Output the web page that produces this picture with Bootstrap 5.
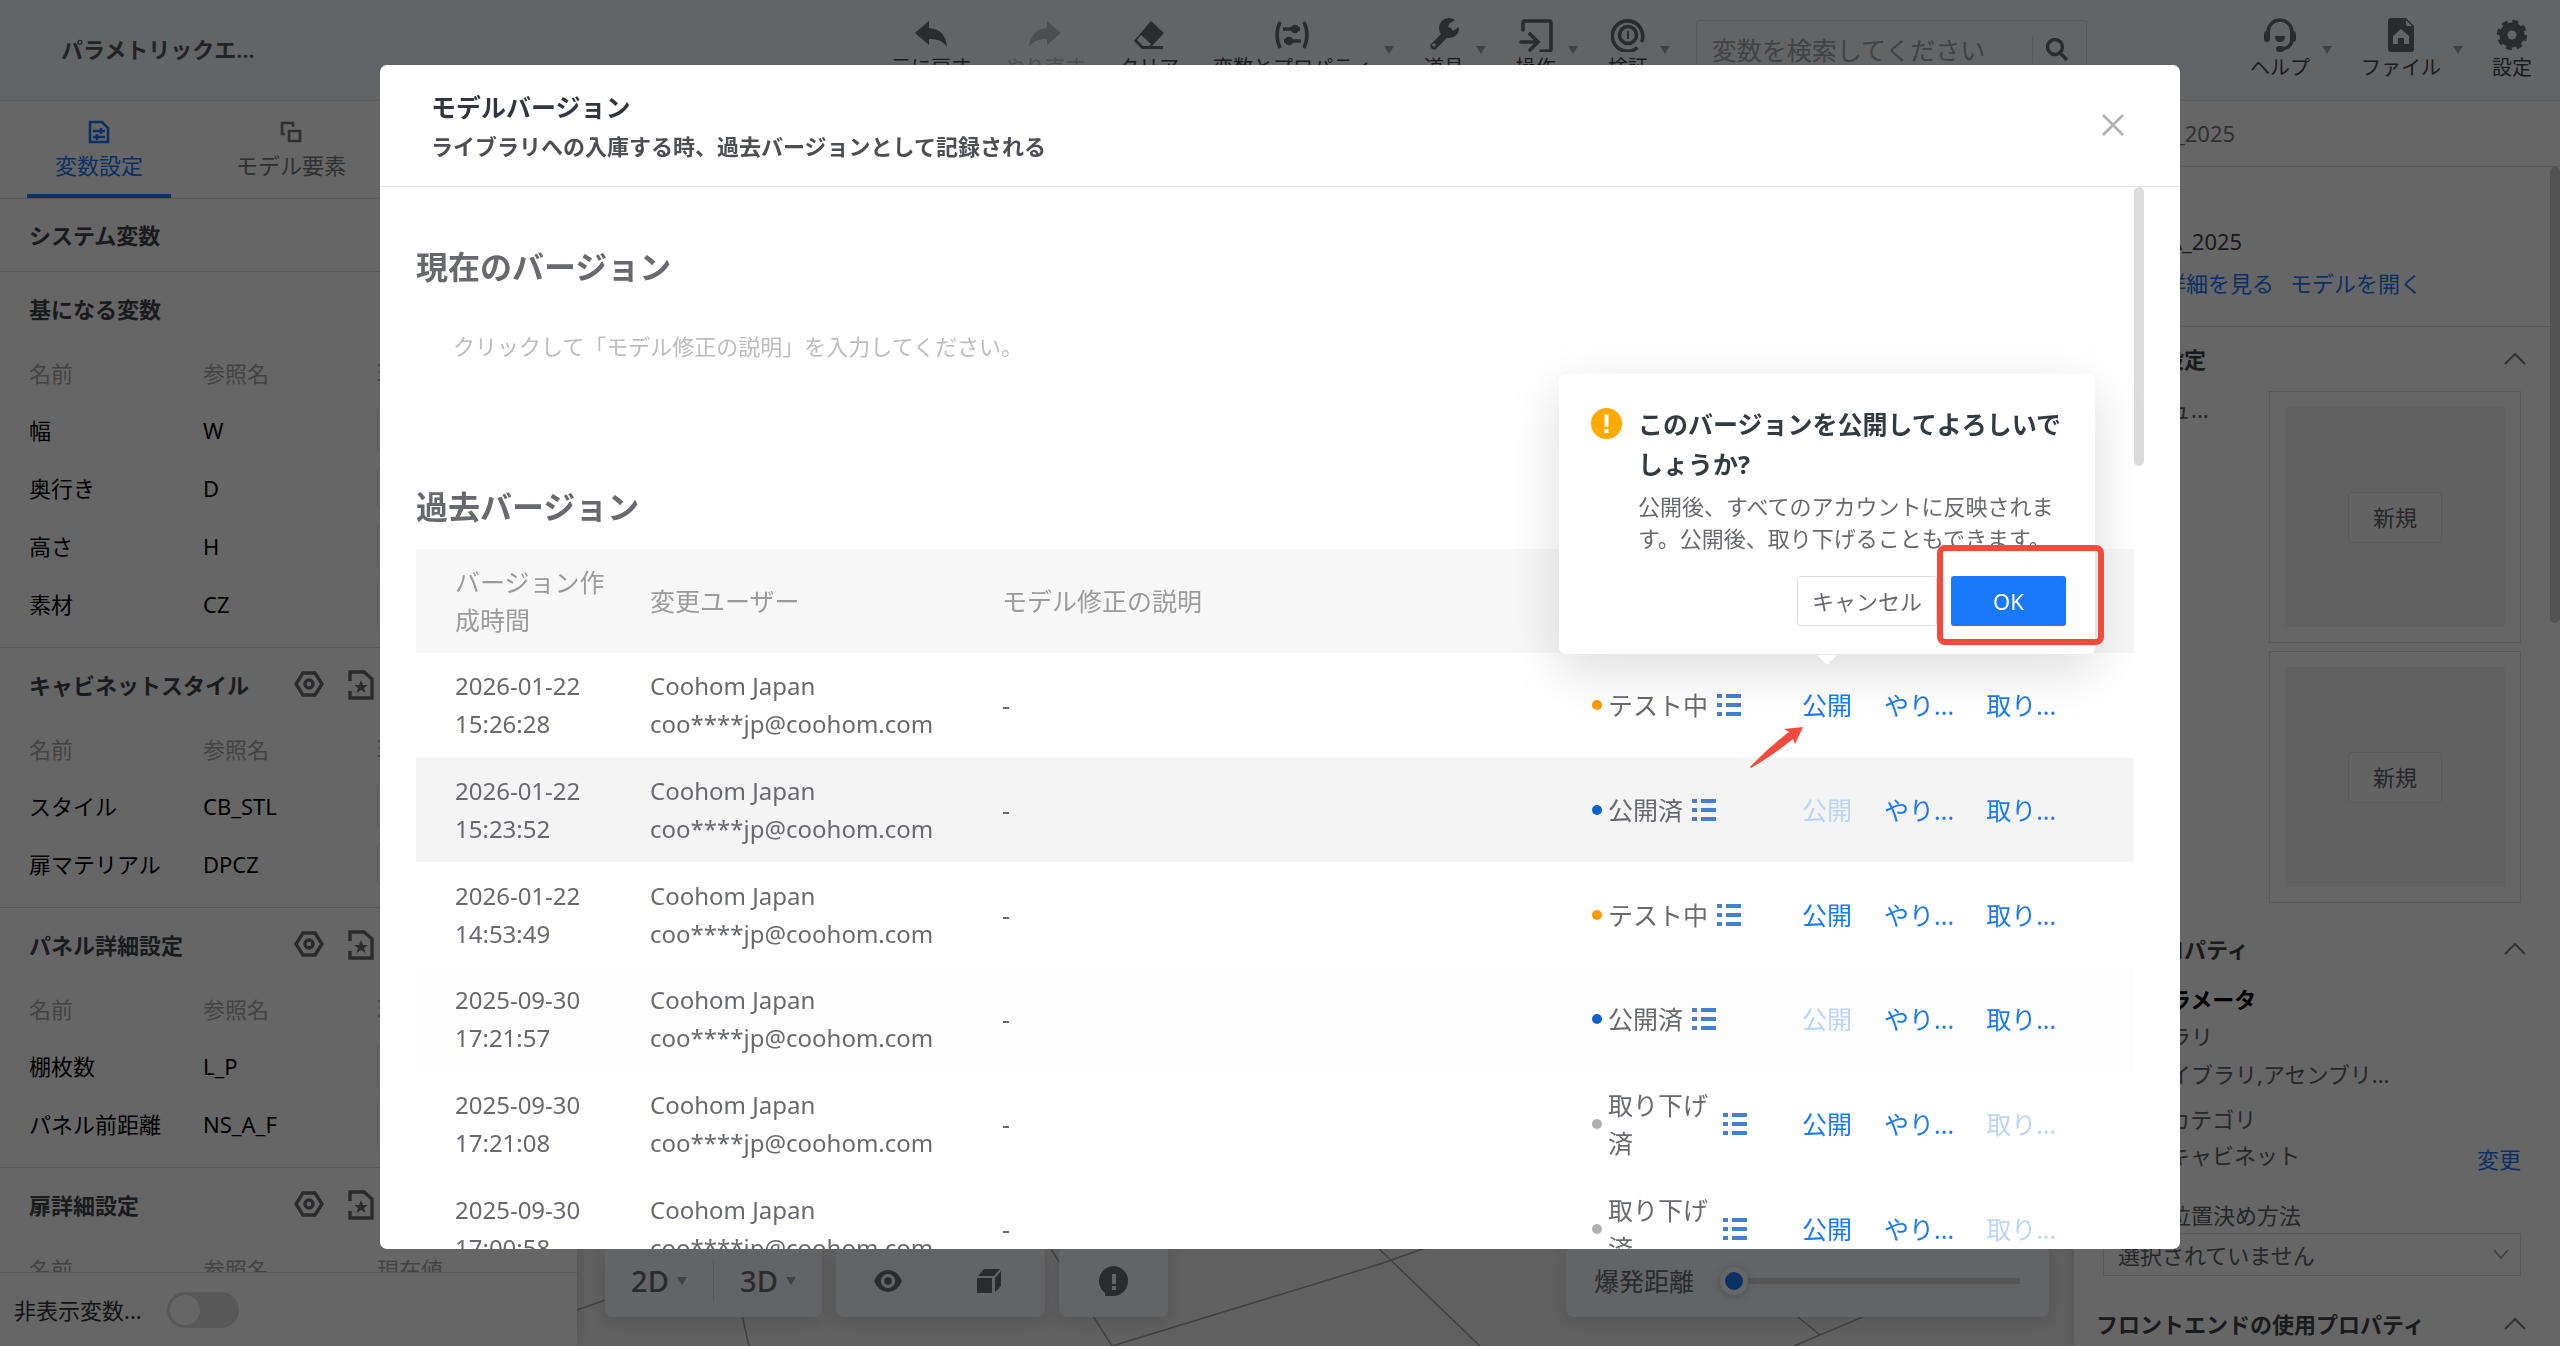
<!DOCTYPE html>
<html lang="ja">
<head>
<meta charset="utf-8">
<meta name="viewport" content="width=device-width, initial-scale=1">
<title>パラメトリックエディタ</title>
<link href="https://cdn.jsdelivr.net/npm/bootstrap@5.3.0/dist/css/bootstrap.min.css" rel="stylesheet">
<style>
  :root { --blue: #1a79fb; --ink: #434548; --line: #dcdee2; --bar: #f7f9ff; }
  body { font-family: "Noto Sans", "Noto Sans CJK JP", sans-serif; font-size: 22px; line-height: 32px; color: #000; height: 100vh; overflow: hidden; background: #f0f0f0; }
  button, input, select, textarea { font-family: inherit; }
  .plain { background: none; border: 0; padding: 0; color: inherit; }
  svg { display: block; flex: none; }

  /* top bar */
  .topbar { height: 101px; background: var(--bar); border-bottom: 1px solid var(--line); color: #696b70; }
  .brand { flex: 0 0 891px; padding-left: 61px; line-height: 98px; font-weight: 600; color: #55575c; }
  .tools { padding-top: 18px; gap: 34px; font-size: 20px; line-height: 24px; }
  .tools-end { gap: 33px; padding-right: 28px; }
  .tool { gap: 4px; color: #696b70; }
  .tool span { color: #45474c; }
  .tool.off, .tool.off span { color: #c0c2c8; }
  .tool svg { width: 34px; height: 34px; }
  .has-caret { gap: 12px; margin-right: -4px; }
  .down { width: 0; height: 0; border: 5px solid transparent; border-top: 8px solid #a4a6ab; border-bottom: 0; }
  .has-caret .down { margin-top: 28px; }
  .finder { width: 391px; height: 60px; margin: 20px 0 0 30px; border: 1px solid var(--line); border-radius: 4px; font-size: 25px; }
  .finder input { background: none; border: 0; width: 335px; padding: 0 15px; outline: 0; }
  .finder input::placeholder { color: #a3a5aa; }
  .finder button { border-left: 1px solid var(--line); height: 26px; padding-left: 13px; }

  /* left panel */
  .side { width: 577px; background: #fff; box-shadow: 0 0 12px rgba(0,0,0,.12); z-index: 1; }
  .tabs { height: 98px; padding-left: 27px; gap: 48px; border-bottom: 1px solid var(--line); }
  .tabs button { width: 144px; padding-top: 18px; gap: 4px; color: #77797e; border-bottom: 4px solid transparent; }
  .tabs button.active { color: var(--blue); border-color: var(--blue); }
  .group-box { border-bottom: 1px solid var(--line); padding: 0 28px 14px 29px; }
  .group-head { height: 74px; font-weight: 700; color: var(--ink); }
  .sysvar { height: 73px; padding-bottom: 0; }
  .vars { width: 100%; table-layout: fixed; }
  .vars th { height: 55px; font-weight: 400; color: #a8a8a8; padding: 0 0 2px; }
  .vars td { height: 58px; padding: 0; }
  .vars col:first-child, .vars col:nth-child(2) { width: 174px; }
  .vars input { width: 100%; height: 42px; border: 1px solid var(--line); border-radius: 3px; padding: 0 10px; }
  .group-icons { position: absolute; left: 294px; gap: 24px; color: #696b70; }
  .footbar { height: 74px; border-top: 1px solid var(--line); padding-left: 14px; gap: 25px; flex: none; color: #333; }
  .switchy { appearance: none; width: 72px; height: 36px; border-radius: 18px; background: #dcdcdc; margin: 0; }
  .switchy::before { content: ""; display: block; width: 30px; height: 30px; margin: 3px; border-radius: 50%; background: #fff; }

  /* canvas */
  .stage { min-width: 0; position: relative; }
  .stage > svg { position: absolute; inset: 0; width: 100%; height: 100%; }
  .dock { position: absolute; left: 28px; right: 25px; bottom: 29px; gap: 14px; }
  .dock > div { height: 72px; border-radius: 8px; background: var(--bar); box-shadow: 0 4px 20px rgba(0,0,0,.12); color: #696b70; }
  .views { width: 217px; }
  .shows { width: 209px; padding: 0 12px 0 21px; }
  .notes { width: 109px; }
  .burst { width: 483px; padding: 0 29px 0 28px; font-size: 25px; }
  .view { font-size: 29px; font-weight: 500; gap: 8px; flex: 1; height: 42px; }
  .view + .view { border-left: 1px solid var(--line); }
  .rangey { appearance: none; width: 300px; height: 40px; background: linear-gradient(#d6d7da,#d6d7da) center / 100% 6px no-repeat; }
  .rangey::-webkit-slider-thumb { appearance: none; width: 28px; height: 28px; border-radius: 50%; background: var(--blue); border: 5px solid #fff; box-shadow: 0 2px 8px rgba(0,0,0,.2); }

  /* right panel */
  .props { width: 486px; background: #fff; box-shadow: 0 0 12px rgba(0,0,0,.12); z-index: 1; position: relative; color: #606266; }
  .props .pane { padding: 0 39px 0 29px; }
  .doc-name { height: 66px; padding-left: 22px; border-bottom: 1px solid var(--line); line-height: 65px; flex: none; color: #77797e; }
  .model { height: 160px; margin-right: 10px; padding: 56px 0 0 22px; border-bottom: 1px solid var(--line); gap: 14px; color: #444; }
  .model .pic { width: 54px; height: 54px; background: #eee; }
  .model a, .props a { color: var(--blue); text-decoration: none; }
  .sec { height: 64px; padding: 0 34px 0 22px; font-weight: 700; color: var(--ink); flex: none; }
  .sec-gap { margin-top: 14px; }
  .thumb { width: 252px; height: 252px; border: 1px solid var(--line); padding: 15px; }
  .thumb div { background: #f3f3f3; width: 100%; height: 100%; }
  .thumb button { width: 94px; height: 51px; border: 1px solid var(--line); border-radius: 4px; background: #f8f8f8; color: #606266; }
  .l36 { line-height: 36px; } .l38 { line-height: 38px; }
  .place { margin-top: 20px; }
  .picker { width: 100%; height: 43px; border: 1px solid var(--line); border-radius: 0; background: none; padding: 0 14px; appearance: none; color: #606266; }
  .picker-mark { position: absolute; right: 12px; top: 15px; }
  .thumb-bar { position: absolute; right: 0; top: 66px; width: 10px; height: 456px; border-radius: 5px; background: #ccc; }

  /* dialog */
  .modal-backdrop { opacity: .6; }
  .modal-dialog { max-width: 1800px; margin: 65px auto; }
  .modal-content { height: calc(100vh - 162px); border: 0; border-radius: 7px; }
  .modal-header { height: 122px; padding: 21px 56px 0 51px; border-color: #e8e8e8; align-items: start; flex: none; }
  .modal-title { font-size: 25px; line-height: 42px; font-weight: 700; color: #333640; }
  .sub { line-height: 36px; font-weight: 700; color: #4c4e53; }
  .modal-body { padding: 56px 46px 0 36px; overflow: hidden; border-radius: 0 0 7px 7px; color: #67696f; }
  .modal-body h2 { font-size: 32px; line-height: 48px; font-weight: 700; margin: 0; }
  .memo { display: block; width: 100%; height: 154px; margin-top: 38px; padding: 0 37px; border: 0; resize: none; line-height: 34px; }
  .memo::placeholder { color: #bcbcbc; }
  .history { width: 100%; height: 732px; table-layout: fixed; margin-top: 18px; font-size: 25px; line-height: 38px; }
  .history th { font-weight: 400; color: #9b9b9b; background: #f7f7f7; }
  .history th, .history td { height: 104px; padding: 0 4px 0 37px; }
  .history th:first-child, .history td:first-child { padding-left: 39px; }
  .history td:nth-child(-n+2) { font-size: 24px; }
  .history tbody tr:nth-child(2) { background: #f4f4f4; }
  .history tbody tr:nth-child(4) { background: #fdfdfd; }
  .dot { width: 10px; height: 10px; border-radius: 50%; flex: none; margin-right: 6px; }
  .test { background: #ff9900; } .open { background: #1060d0; } .closed { background: #b0b0b0; }
  .state { max-width: 106px; margin-right: 9px; }
  .acts { gap: 32px; }
  .acts button { color: var(--blue); }
  .acts button:disabled { color: #b9d5fb; }
  .modal-thumb { position: absolute; right: 36px; top: 122px; width: 10px; height: 279px; border-radius: 5px; background: #dcdcdc; }

  /* confirmation bubble */
  .confirm { position: absolute; right: 85px; top: 309px; width: 536px; padding: 30px 29px 28px 32px; border-radius: 7px; background: #fff; box-shadow: 0 16px 54px rgba(0,0,0,.14); gap: 16px; z-index: 2; }
  .confirm::after { content: ""; position: absolute; left: 258px; top: 281px; border: 10px solid transparent; border-top-color: #fff; border-bottom: 0; }
  .confirm h3 { font-size: 25px; line-height: 40px; font-weight: 700; color: #333a42; margin: 0 0 6px; }
  .confirm p { line-height: 32px; color: #67696f; margin: 0 0 22px; }
  .confirm button { height: 50px; border-radius: 3px; }
  .choices { gap: 14px; }
  .cancel { width: 140px; background: #fff; border: 1px solid #dcdee2; color: #67696f; }
  .ok { width: 115px; background: var(--blue); border: 0; color: #fff; }
  .ring { position: absolute; right: -9px; bottom: 9px; width: 167px; height: 100px; border: 6px solid #f24b3e; border-radius: 8px; }
  .pointer { position: absolute; right: 375px; top: 661px; z-index: 3; }
</style>
<script src="https://cdn.jsdelivr.net/npm/bootstrap@5.3.0/dist/js/bootstrap.bundle.min.js"></script>
</head>
<body class="d-flex flex-column">

<svg class="d-none">
  <symbol id="i-back" viewBox="0 0 34 34"><path d="M1 15 15 3v7c12 1 17 8 18 19-4-6-9-8-18-8v6z" fill="currentColor"/></symbol>
  <symbol id="i-hex" viewBox="0 0 30 28"><path d="M9 3h12l7 11-7 11H9L2 14z" fill="none" stroke="currentColor" stroke-width="3.4"/><circle cx="15" cy="14" r="4" fill="none" stroke="currentColor" stroke-width="3.4"/></symbol>
  <symbol id="i-star" viewBox="0 0 26 30"><path d="M2 11V2h14l8 7v19H2v-7" fill="none" stroke="currentColor" stroke-width="3.4"/><path d="m13 10 2 5h5l-4 3 1.500 5-4.500-3-4.500 3L10 18l-4-3h5z" fill="currentColor"/></symbol>
  <symbol id="i-list" viewBox="0 0 24 22"><path d="M0 0h5v4H0zM9 0h15v4H9zM0 9h5v4H0zM9 9h15v4H9zM0 18h5v4H0zM9 18h15v4H9z" fill="#4380cf"/></symbol>
  <symbol id="i-up" viewBox="0 0 22 14"><path d="m1 12 10-10 10 10" fill="none" stroke="#808285" stroke-width="2.200"/></symbol>
</svg>

<header class="topbar d-flex flex-shrink-0">
  <div class="brand">パラメトリックエ...</div>
  <div class="tools d-flex align-items-start">
    <button class="plain tool d-flex flex-column align-items-center"><svg><use href="#i-back"/></svg><span>元に戻す</span></button>
    <button class="plain tool off d-flex flex-column align-items-center"><svg viewBox="0 0 34 34"><path d="M33 15 19 3v7C7 11 2 18 1 29c4-6 9-8 18-8v6z" fill="currentColor"/></svg><span>やり直す</span></button>
    <button class="plain tool d-flex flex-column align-items-center"><svg viewBox="0 0 34 34"><path d="m19 3 13 12-12 13h11v3H10l-8-8z" fill="currentColor"/><path d="m9 17 10 9-2 2h-6l-6-6z" fill="#f7f9ff"/></svg><span>クリア</span></button>
    <div class="d-flex has-caret"><button class="plain tool d-flex flex-column align-items-center"><svg viewBox="0 0 34 34" fill="none" stroke="currentColor" stroke-width="3.600"><path d="M5 4q-6 13 0 26M29 4q6 13 0 26M8 11h17M9 23h17"/><circle cx="20" cy="11" r="2.500"/><circle cx="14" cy="23" r="2.500"/></svg><span>変数とプロパティ</span></button><i class="down"></i></div>
    <div class="d-flex has-caret"><button class="plain tool d-flex flex-column align-items-center"><svg viewBox="0 0 34 34"><path d="M7 28 22 13" stroke="currentColor" stroke-width="7" stroke-linecap="round"/><path d="M28 2a10 10 0 1 0 4 7l-6 4-5-2 1-5z" fill="currentColor"/><circle cx="7" cy="27" r="1.700" fill="#f7f9ff"/></svg><span>道具</span></button><i class="down"></i></div>
    <div class="d-flex has-caret"><button class="plain tool d-flex flex-column align-items-center"><svg viewBox="0 0 34 34" fill="none" stroke="currentColor" stroke-width="3.600" stroke-linecap="round"><path d="M4 12V5q0-2 2-2h24q2 0 2 2v26q0 2-2 2h-8M2 24h16M11 16l8 8-8 8"/></svg><span>操作</span></button><i class="down"></i></div>
    <div class="d-flex has-caret"><button class="plain tool d-flex flex-column align-items-center"><svg viewBox="0 0 34 34" fill="none" stroke="currentColor" stroke-width="3.600"><path d="M26.500 29.500a15.200 15.200 0 1 1 4-5.500"/><circle cx="17" cy="17" r="8.500"/><path d="M17 13v8" stroke-width="2"/></svg><span>検証</span></button><i class="down"></i></div>
  </div>
  <form class="finder d-flex align-items-center">
    <input type="text" placeholder="変数を検索してください" aria-label="変数を検索">
    <button type="button" class="plain" aria-label="検索"><svg width="23" height="24" viewBox="0 0 23 24" fill="none" stroke="currentColor" stroke-width="3.400"><circle cx="9" cy="9" r="7.500"/><path d="m14 15 7 7"/></svg></button>
  </form>
  <div class="tools tools-end d-flex align-items-start ms-auto">
    <div class="d-flex has-caret"><button class="plain tool d-flex flex-column align-items-center"><svg viewBox="0 0 34 34"><path d="M5 20V14a12 12 0 0 1 24 0v8q-1 8-10 9" fill="none" stroke="currentColor" stroke-width="3.400"/><rect x="1" y="13" width="6" height="11" rx="3" fill="currentColor"/><rect x="27" y="13" width="6" height="11" rx="3" fill="currentColor"/><path d="M12 18h10q0 6-5 6t-5-6z" fill="currentColor"/><rect x="13" y="28" width="8" height="6" rx="3" fill="currentColor"/></svg><span>ヘルプ</span></button><i class="down"></i></div>
    <div class="d-flex has-caret"><button class="plain tool d-flex flex-column align-items-center"><svg viewBox="0 0 34 34"><path d="M7 0h15l8 8v23q0 3-3 3H7q-3 0-3-3V3q0-3 3-3z" fill="currentColor"/><path d="m17 11 8 7v8h-5v-6h-6v6H9v-8zM22 2l6 6h-6z" fill="#f7f9ff"/></svg><span>ファイル</span></button><i class="down"></i></div>
    <button class="plain tool d-flex flex-column align-items-center"><svg viewBox="0 0 34 34" fill="none" stroke="currentColor"><circle cx="17" cy="17" r="8.500" stroke-width="8"/><circle cx="17" cy="17" r="12.700" stroke-width="5" stroke-dasharray="5.500 4.470"/></svg><span>設定</span></button>
  </div>
</header>

<main class="d-flex flex-grow-1 overflow-hidden">
  <aside class="side d-flex flex-column flex-shrink-0">
    <nav class="tabs d-flex flex-shrink-0">
      <button class="plain active d-flex flex-column align-items-center"><svg width="22" height="26" viewBox="0 0 22 26" fill="none" stroke="currentColor" stroke-width="2.600"><path d="M2 3h12l6 6v14H2zM5 12h12M5 18h12M13 9v6M9 15v6"/></svg>変数設定</button>
      <button class="plain d-flex flex-column align-items-center"><svg width="22" height="26" viewBox="0 0 22 26" fill="none" stroke="currentColor" stroke-width="2.600"><path d="M9 12h11v10H9zM5 15H2V4h11v4"/></svg>モデル要素</button>
    </nav>
    <div class="flex-grow-1 overflow-hidden position-relative">
      <section class="group-box sysvar group-head d-flex align-items-center">システム変数</section>
      <section class="group-box">
        <div class="group-head d-flex align-items-center">基になる変数</div>
        <table class="vars"><colgroup><col><col><col></colgroup>
          <tr><th>名前</th><th>参照名</th><th>現在値</th></tr>
          <tr><td>幅</td><td>W</td><td><input aria-label="幅"></td></tr>
          <tr><td>奥行き</td><td>D</td><td><input aria-label="奥行き"></td></tr>
          <tr><td>高さ</td><td>H</td><td><input aria-label="高さ"></td></tr>
          <tr><td>素材</td><td>CZ</td><td><input aria-label="素材"></td></tr>
        </table>
      </section>
      <section class="group-box">
        <div class="group-head d-flex align-items-center">キャビネットスタイル<span class="group-icons d-flex"><svg width="30" height="28"><use href="#i-hex"/></svg><svg width="26" height="30"><use href="#i-star"/></svg></span></div>
        <table class="vars"><colgroup><col><col><col></colgroup>
          <tr><th>名前</th><th>参照名</th><th>現在値</th></tr>
          <tr><td>スタイル</td><td>CB_STL</td><td><input aria-label="スタイル"></td></tr>
          <tr><td>扉マテリアル</td><td>DPCZ</td><td><input aria-label="扉マテリアル"></td></tr>
        </table>
      </section>
      <section class="group-box">
        <div class="group-head d-flex align-items-center">パネル詳細設定<span class="group-icons d-flex"><svg width="30" height="28"><use href="#i-hex"/></svg><svg width="26" height="30"><use href="#i-star"/></svg></span></div>
        <table class="vars"><colgroup><col><col><col></colgroup>
          <tr><th>名前</th><th>参照名</th><th>現在値</th></tr>
          <tr><td>棚枚数</td><td>L_P</td><td><input aria-label="棚枚数"></td></tr>
          <tr><td>パネル前距離</td><td>NS_A_F</td><td><input aria-label="パネル前距離"></td></tr>
        </table>
      </section>
      <section class="group-box">
        <div class="group-head d-flex align-items-center">扉詳細設定<span class="group-icons d-flex"><svg width="30" height="28"><use href="#i-hex"/></svg><svg width="26" height="30"><use href="#i-star"/></svg></span></div>
        <table class="vars"><colgroup><col><col><col></colgroup>
          <tr><th>名前</th><th>参照名</th><th>現在値</th></tr>
        </table>
      </section>
    </div>
    <div class="footbar d-flex align-items-center"><label for="hiddenVars">非表示変数...</label><input type="checkbox" id="hiddenVars" class="switchy"></div>
  </aside>

  <section class="stage flex-grow-1">
    <svg viewBox="0 0 1497 1245" preserveAspectRatio="none" fill="none" stroke="#a0a0a0" stroke-width="1.500"><path d="M0 1209 45 1193M155 1170 172 1245M469 1140 535 1245M535 1245 800 1164 860 1143M797 1143 903 1245M1205 1203 1243 1234 1300 1210M1243 1234 1217 1245"/></svg>
    <div class="dock d-flex">
      <div class="views d-flex align-items-center">
        <button class="plain view d-flex align-items-center justify-content-center">2D<i class="down"></i></button>
        <button class="plain view d-flex align-items-center justify-content-center">3D<i class="down"></i></button>
      </div>
      <div class="shows d-flex align-items-center justify-content-between">
        <button class="plain px-3" aria-label="表示"><svg width="30" height="24" viewBox="0 0 30 24"><path d="M1 12Q6 1 15 1t14 11q-5 11-14 11T1 12z" fill="currentColor"/><circle cx="15" cy="12" r="5.500" fill="currentColor" stroke="#f7f9ff" stroke-width="3.400"/></svg></button>
        <button class="plain px-3 me-3" aria-label="立体"><svg width="24" height="24" viewBox="0 0 24 24" fill="currentColor"><path d="M0 9h15v15H0zM7 0h16l-6 7H1zM18 9l6-7v15l-6 6z"/></svg></button>
      </div>
      <div class="notes d-flex align-items-center justify-content-center"><button class="plain" aria-label="情報"><svg width="30" height="31" viewBox="0 0 30 31"><path d="M15 0a15 15 0 1 1-2 30H6v-3A15 15 0 0 1 15 0z" fill="currentColor"/><path d="M13 8h4v10h-4zM13 20h4v4h-4z" fill="#f7f9ff"/></svg></button></div>
      <div class="burst d-flex align-items-center justify-content-between ms-auto"><label for="explode">爆発距離</label><input type="range" class="rangey" id="explode" min="0" max="100" value="0"></div>
    </div>
  </section>

  <aside class="props d-flex flex-column flex-shrink-0 overflow-hidden">
    <div class="doc-name">ベースA_2025</div>
    <div class="model d-flex flex-shrink-0"><div class="pic"></div><div><div class="l36 ps-1">A_2025</div><div class="mt-2 d-flex gap-3"><a href="#">詳細を見る</a><a href="#">モデルを開く</a></div></div></div>
    <div class="sec d-flex align-items-center justify-content-between">モデル設定<svg width="22" height="14"><use href="#i-up"/></svg></div>
    <div class="pane d-flex justify-content-between"><div class="l36">プレビュ...</div>
      <div class="d-flex flex-column gap-2">
        <div class="thumb"><div class="d-flex align-items-center justify-content-center"><button>新規</button></div></div>
        <div class="thumb"><div class="d-flex align-items-center justify-content-center"><button>新規</button></div></div>
      </div>
    </div>
    <div class="sec sec-gap d-flex align-items-center justify-content-between">基本プロパティ<svg width="22" height="14"><use href="#i-up"/></svg></div>
    <div class="pane">
      <div class="l36 fw-bold text-black">基本パラメータ</div>
      <div class="l38">ライブラリ</div>
      <div class="l38">共有ライブラリ,アセンブリ...</div>
      <div class="l36 mt-2">モデルカテゴリ</div>
      <div class="l36 d-flex justify-content-between">ベースキャビネット<a href="#" class="pt-1">変更</a></div>
      <label for="anchor" class="l36 d-block place">モデル位置決め方法</label>
      <div class="position-relative"><select id="anchor" class="picker"><option>選択されていません</option></select><svg class="picker-mark" width="16" height="12" viewBox="0 0 16 12"><path d="m1 2 7 8 7-8" fill="none" stroke="#999" stroke-width="1.600"/></svg></div>
    </div>
    <div class="sec mt-3 d-flex align-items-center justify-content-between">フロントエンドの使用プロパティ<svg width="22" height="14"><use href="#i-up"/></svg></div>
    <div class="thumb-bar"></div>
  </aside>
</main>

<div class="modal-backdrop"></div>
<div class="modal d-block overflow-hidden" role="dialog" aria-labelledby="dlgTitle">
  <div class="modal-dialog">
    <div class="modal-content">
      <div class="modal-header">
        <div><h1 class="modal-title" id="dlgTitle">モデルバージョン</h1><div class="sub">ライブラリへの入庫する時、過去バージョンとして記録される</div></div>
        <button class="plain mt-4" aria-label="閉じる"><svg class="mt-1" width="22" height="22" viewBox="0 0 22 22"><path d="m1 1 20 20M21 1 1 21" stroke="#b0b0b0" stroke-width="2.600"/></svg></button>
      </div>
      <div class="modal-body">
        <h2>現在のバージョン</h2>
        <textarea class="memo" aria-label="モデル修正の説明" placeholder="クリックして「モデル修正の説明」を入力してください。"></textarea>
        <h2>過去バージョン</h2>
        <table class="history">
          <colgroup><col style="width:197px"><col style="width:352px"><col><col style="width:210px"><col style="width:369px"></colgroup>
          <thead><tr><th>バージョン作成時間</th><th>変更ユーザー</th><th>モデル修正の説明</th><th></th><th></th></tr></thead>
          <tbody>
            <tr><td>2026-01-22 15:26:28</td><td>Coohom Japan<br>coo****jp@coohom.com</td><td>-</td>
              <td><div class="d-flex align-items-center"><i class="dot test"></i><span class="state">テスト中</span><svg width="24" height="22"><use href="#i-list"/></svg></div></td>
              <td><div class="acts d-flex"><button class="plain">公開</button><button class="plain">やり...</button><button class="plain">取り...</button></div></td></tr>
            <tr><td>2026-01-22 15:23:52</td><td>Coohom Japan<br>coo****jp@coohom.com</td><td>-</td>
              <td><div class="d-flex align-items-center"><i class="dot open"></i><span class="state">公開済</span><svg width="24" height="22"><use href="#i-list"/></svg></div></td>
              <td><div class="acts d-flex"><button class="plain" disabled>公開</button><button class="plain">やり...</button><button class="plain">取り...</button></div></td></tr>
            <tr><td>2026-01-22 14:53:49</td><td>Coohom Japan<br>coo****jp@coohom.com</td><td>-</td>
              <td><div class="d-flex align-items-center"><i class="dot test"></i><span class="state">テスト中</span><svg width="24" height="22"><use href="#i-list"/></svg></div></td>
              <td><div class="acts d-flex"><button class="plain">公開</button><button class="plain">やり...</button><button class="plain">取り...</button></div></td></tr>
            <tr><td>2025-09-30 17:21:57</td><td>Coohom Japan<br>coo****jp@coohom.com</td><td>-</td>
              <td><div class="d-flex align-items-center"><i class="dot open"></i><span class="state">公開済</span><svg width="24" height="22"><use href="#i-list"/></svg></div></td>
              <td><div class="acts d-flex"><button class="plain" disabled>公開</button><button class="plain">やり...</button><button class="plain">取り...</button></div></td></tr>
            <tr><td>2025-09-30 17:21:08</td><td>Coohom Japan<br>coo****jp@coohom.com</td><td>-</td>
              <td><div class="d-flex align-items-center"><i class="dot closed"></i><span class="state">取り下げ済</span><svg width="24" height="22"><use href="#i-list"/></svg></div></td>
              <td><div class="acts d-flex"><button class="plain">公開</button><button class="plain">やり...</button><button class="plain" disabled>取り...</button></div></td></tr>
            <tr><td>2025-09-30 17:00:58</td><td>Coohom Japan<br>coo****jp@coohom.com</td><td>-</td>
              <td><div class="d-flex align-items-center"><i class="dot closed"></i><span class="state">取り下げ済</span><svg width="24" height="22"><use href="#i-list"/></svg></div></td>
              <td><div class="acts d-flex"><button class="plain">公開</button><button class="plain">やり...</button><button class="plain" disabled>取り...</button></div></td></tr>
          </tbody>
        </table>
      </div>
      <div class="modal-thumb"></div>
      <div class="confirm d-flex" role="alertdialog" aria-labelledby="askTitle">
        <svg class="mt-1" width="31" height="31" viewBox="0 0 31 31"><circle cx="15.500" cy="15.500" r="15.500" fill="#ffaa00"/><path d="M13.500 6.500h4v12h-4zM13.500 21h4v4h-4z" fill="#fff"/></svg>
        <div>
          <h3 id="askTitle">このバージョンを公開してよろしいでしょうか?</h3>
          <p>公開後、すべてのアカウントに反映されます。公開後、取り下げることもできます。</p>
          <div class="choices d-flex justify-content-end"><button class="cancel p-0">キャンセル</button><button class="ok">OK</button></div>
        </div>
        <div class="ring"></div>
      </div>
      <svg class="pointer" width="56" height="44" viewBox="0 0 56 44"><path d="M54 1 35 3l5 3Q20 21 1 41l1 1Q24 29 44 13l2 5z" fill="#f24b3e"/></svg>
    </div>
  </div>
</div>
</body>
</html>
